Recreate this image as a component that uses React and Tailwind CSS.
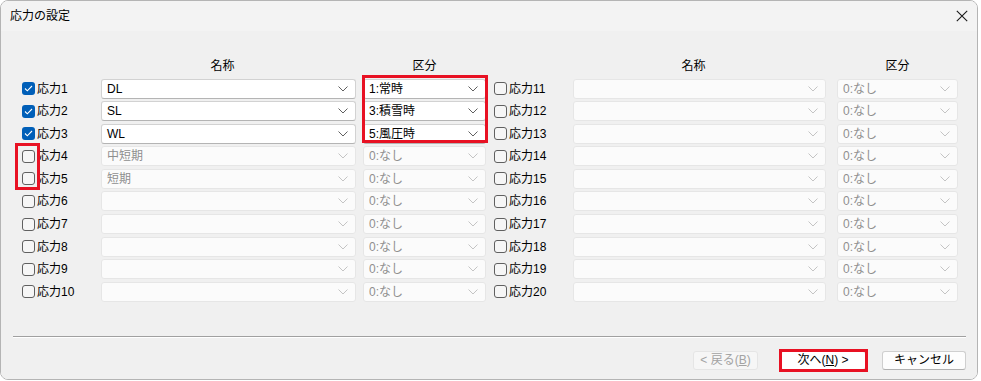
import React from 'react';

const FONT = { fontFamily: '"Liberation Sans", "Noto Sans CJK JP", sans-serif' };

const rows = [
  { n: 1, on: true, name: 'DL', kind: '1:常時' },
  { n: 2, on: true, name: 'SL', kind: '3:積雪時' },
  { n: 3, on: true, name: 'WL', kind: '5:風圧時' },
  { n: 4, on: false, name: '中短期', kind: '0:なし' },
  { n: 5, on: false, name: '短期', kind: '0:なし' },
  { n: 6, on: false, name: '', kind: '0:なし' },
  { n: 7, on: false, name: '', kind: '0:なし' },
  { n: 8, on: false, name: '', kind: '0:なし' },
  { n: 9, on: false, name: '', kind: '0:なし' },
  { n: 10, on: false, name: '', kind: '0:なし' },
];

const Chevron = ({ on }) => (
  <svg width="10" height="6" viewBox="0 0 10 6" className="shrink-0">
    <path d="M0.5 0.5 L5 5 L9.5 0.5" fill="none" stroke={on ? '#606060' : '#c4c4c4'} strokeWidth="1" />
  </svg>
);

const Combo = ({ w, text, on }) => (
  <div
    className={`${w} h-[20px] flex items-center justify-between pl-[5px] pr-[7px] rounded-[3px] border text-[12px] ${
      on ? 'bg-white border-[#d2d2d2] border-b-[#b4b4b4] text-black' : 'bg-[#fbfbfb] border-[#e6e6e6] text-[#8f8f8f]'
    }`}
  >
    <span className="leading-none">{text}</span>
    <Chevron on={on} />
  </div>
);

const Check = ({ on }) =>
  on ? (
    <div className="w-[13px] h-[13px] rounded-[3px] bg-[#005fb8] flex items-center justify-center shrink-0">
      <svg width="9" height="7" viewBox="0 0 9 7">
        <path d="M1 3.5 L3.3 5.8 L8 1" fill="none" stroke="#ffffff" strokeWidth="1.1" />
      </svg>
    </div>
  ) : (
    <div className="w-[13px] h-[13px] rounded-[3px] border border-[#606060] bg-[#f6f6f6] shrink-0" />
  );

const Label = ({ n, on }) => (
  <div className="w-[79px] flex items-center gap-[2px] shrink-0">
    <Check on={on} />
    <span className="text-[12px] text-black leading-none">応力{n}</span>
  </div>
);

const App = () => {
  return (
    <div className="w-[981px] h-[381px] bg-white" style={FONT}>
      <div className="w-[978px] h-[380px] border border-[#b4b4b4] rounded-lg overflow-hidden flex flex-col">
        <div className="h-[30px] bg-[#f3f3f3] flex items-center justify-between pl-[9px] pr-[9px] shrink-0">
          <span className="text-[12px] text-black">応力の設定</span>
          <svg width="12" height="12" viewBox="0 0 12 12">
            <path d="M0.8 0.8 L11.2 11.2 M11.2 0.8 L0.8 11.2" stroke="#1a1a1a" strokeWidth="1.1" />
          </svg>
        </div>

        <div className="flex-1 bg-[#f0f0f0] relative pt-[27px]">
          <div className="flex pl-[21px] h-[16px] items-center text-[12px] text-black">
            <div className="w-[79px]" />
            <div className="w-[255px] text-center pr-[12px]">名称</div>
            <div className="w-[7px]" />
            <div className="w-[123px] text-center">区分</div>
            <div className="w-[8px]" />
            <div className="w-[79px]" />
            <div className="w-[253px] text-center pr-[12px]">名称</div>
            <div className="w-[11px]" />
            <div className="w-[121px] text-center">区分</div>
          </div>

          <div className="flex flex-col gap-[2.6px] pl-[21px] mt-[4.5px]">
            {rows.map((r) => (
              <div key={r.n} className="flex items-center h-[20px]">
                <Label n={r.n} on={r.on} />
                <Combo w="w-[255px]" text={r.name} on={r.on} />
                <div className="w-[7px]" />
                <Combo w="w-[123px]" text={r.kind} on={r.on} />
                <div className="w-[8px]" />
                <Label n={r.n + 10} on={false} />
                <Combo w="w-[253px]" text="" on={false} />
                <div className="w-[11px]" />
                <Combo w="w-[121px]" text="0:なし" on={false} />
              </div>
            ))}
          </div>

          <div className="mt-[34px] ml-[12px] w-[953px] h-[2px] border-t border-[#a0a0a0] border-b border-b-white" />

          <div className="flex justify-end items-center pr-[11px] mt-[13px] text-[12px]">
            <div className="w-[65px] h-[19px] rounded-[3px] border border-[#e5e5e5] bg-[#f6f6f6] text-[#a3a3a3] flex items-center justify-center">
              &lt; 戻る(<span className="underline">B</span>)
            </div>
            <div className="w-[22px]" />
            <div className="relative w-[86px] h-[19px] rounded-[3px] border border-[#cfcfcf] bg-white text-black flex items-center justify-center">
              次へ(<span className="underline">N</span>) &gt;
              <span className="absolute -left-[2px] -right-[3px] -top-[3px] -bottom-[3px] border-[3px] border-[#e81123]" />
            </div>
            <div className="w-[16px]" />
            <div className="w-[84px] h-[19px] rounded-[3px] border border-[#cfcfcf] border-b-[#b0b0b0] bg-[#fdfdfd] text-black flex items-center justify-center">
              キャンセル
            </div>
          </div>

          <span className="absolute left-[361px] top-[44px] w-[126px] h-[68px] border-[3px] border-[#e81123]" />
          <span className="absolute left-[14px] top-[112px] w-[25px] h-[47px] border-[3px] border-[#e81123]" />
        </div>
      </div>
    </div>
  );
};

export default App;
